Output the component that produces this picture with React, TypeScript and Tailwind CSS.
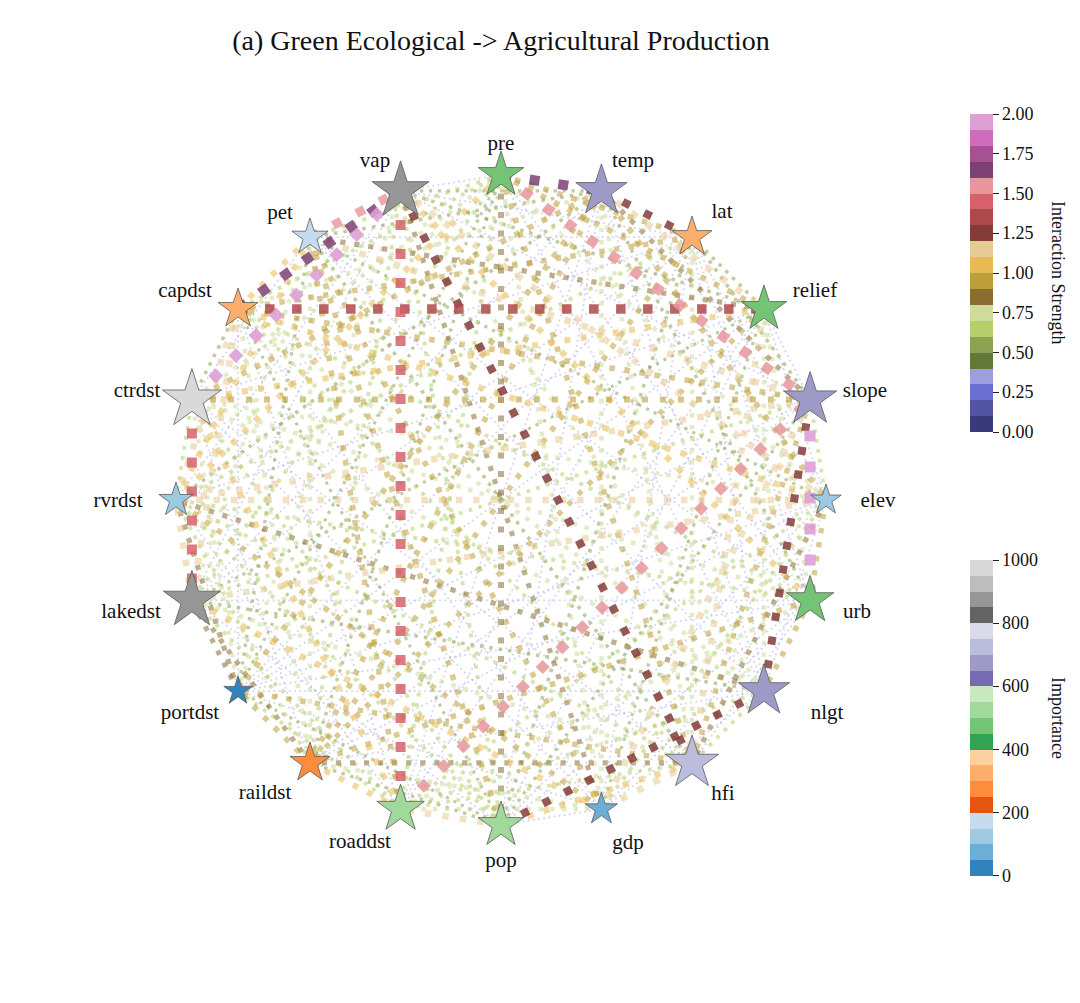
import React from "react";

type Node = { n: string; c: string; r: number; lx: number; ly: number };

const nodes: Node[] = [
  { n: "pre", c: "#74c476", r: 24, lx: 501, ly: 143 },
  { n: "temp", c: "#9e9ac8", r: 27, lx: 633, ly: 160 },
  { n: "lat", c: "#fdae6b", r: 21, lx: 722, ly: 211 },
  { n: "relief", c: "#74c476", r: 24, lx: 815, ly: 290 },
  { n: "slope", c: "#9e9ac8", r: 28, lx: 865, ly: 390 },
  { n: "elev", c: "#9ecae1", r: 16, lx: 878, ly: 500 },
  { n: "urb", c: "#74c476", r: 25, lx: 857, ly: 611 },
  { n: "nlgt", c: "#9e9ac8", r: 27, lx: 827, ly: 712 },
  { n: "hfi", c: "#bcbddc", r: 28, lx: 723, ly: 793 },
  { n: "gdp", c: "#6baed6", r: 17, lx: 628, ly: 842 },
  { n: "pop", c: "#a1d99b", r: 24, lx: 501, ly: 860 },
  { n: "roaddst", c: "#a1d99b", r: 25, lx: 360, ly: 841 },
  { n: "raildst", c: "#fd8d3c", r: 21, lx: 265, ly: 792 },
  { n: "portdst", c: "#3182bd", r: 15, lx: 190, ly: 712 },
  { n: "lakedst", c: "#969696", r: 30, lx: 131, ly: 611 },
  { n: "rvrdst", c: "#9ecae1", r: 18, lx: 118, ly: 500 },
  { n: "ctrdst", c: "#d9d9d9", r: 31, lx: 137, ly: 390 },
  { n: "capdst", c: "#fdae6b", r: 21, lx: 185, ly: 290 },
  { n: "pet", c: "#c6dbef", r: 19, lx: 280, ly: 212 },
  { n: "vap", c: "#969696", r: 30, lx: 375, ly: 160 },
];

const CX = 501;
const CY = 500;
const R = 325;

const pos = nodes.map((_, i) => {
  const a = ((-90 + 18 * i) * Math.PI) / 180;
  return { x: CX + R * Math.cos(a), y: CY + R * Math.sin(a) };
});

const idx = (name: string) => nodes.findIndex((d) => d.n === name);

// tab20b, low -> high
const tab20b = [
  "#393b79", "#5254a3", "#6b6ecf", "#9c9ede", "#637939", "#8ca252", "#b5cf6b", "#cedb9c", "#8c6d31", "#bd9e39",
  "#e7ba52", "#e7cb94", "#843c39", "#ad494a", "#d6616b", "#e7969c", "#7b4173", "#a55194", "#ce6dbd", "#de9ed6",
];

const strengthBar = [
  "bg-[#de9ed6]", "bg-[#ce6dbd]", "bg-[#a55194]", "bg-[#7b4173]", "bg-[#e7969c]", "bg-[#d6616b]", "bg-[#ad494a]",
  "bg-[#843c39]", "bg-[#e7cb94]", "bg-[#e7ba52]", "bg-[#bd9e39]", "bg-[#8c6d31]", "bg-[#cedb9c]", "bg-[#b5cf6b]",
  "bg-[#8ca252]", "bg-[#637939]", "bg-[#9c9ede]", "bg-[#6b6ecf]", "bg-[#5254a3]", "bg-[#393b79]",
];

const importanceBar = [
  "bg-[#d9d9d9]", "bg-[#bdbdbd]", "bg-[#969696]", "bg-[#636363]", "bg-[#dadaeb]", "bg-[#bcbddc]", "bg-[#9e9ac8]",
  "bg-[#756bb1]", "bg-[#c7e9c0]", "bg-[#a1d99b]", "bg-[#74c476]", "bg-[#31a354]", "bg-[#fdd0a2]", "bg-[#fdae6b]",
  "bg-[#fd8d3c]", "bg-[#e6550d]", "bg-[#c6dbef]", "bg-[#9ecae1]", "bg-[#6baed6]", "bg-[#3182bd]",
];

// strong interactions: a, b, colour, width, gap, opacity
const strong: [string, string, string, number, number, number][] = [
  ["pre", "pop", "#8c6d31", 6, 12.5, 0.55],
  ["ctrdst", "slope", "#bd9e39", 6, 12, 0.6],
  ["temp", "lat", "#843c39", 8, 16, 0.85],
  ["slope", "nlgt", "#843c39", 8, 16, 0.85],
  ["nlgt", "pop", "#843c39", 8, 16, 0.85],
  ["vap", "hfi", "#843c39", 8, 16.5, 0.85],
  ["capdst", "relief", "#ad494a", 9.5, 17.5, 0.85],
  ["vap", "roaddst", "#d6616b", 10, 19, 0.85],
  ["ctrdst", "lakedst", "#d6616b", 10, 19, 0.85],
  ["pet", "vap", "#e7969c", 9, 17, 0.8],
  ["pre", "slope", "#e7969c", 10, 17, 0.85],
  ["roaddst", "slope", "#e7969c", 10, 18, 0.85],
  ["capdst", "vap", "#7b4173", 10, 17, 0.85],
  ["pre", "temp", "#7b4173", 10, 19, 0.85],
  ["ctrdst", "vap", "#de9ed6", 10.5, 18, 0.9],
  ["slope", "urb", "#de9ed6", 11, 20, 0.9],
];

function mulberry32(seed: number) {
  let a = seed;
  return () => {
    a |= 0;
    a = (a + 0x6d2b79f5) | 0;
    let t = Math.imul(a ^ (a >>> 15), 1 | a);
    t = (t + Math.imul(t ^ (t >>> 7), 61 | t)) ^ t;
    return ((t ^ (t >>> 14)) >>> 0) / 4294967296;
  };
}

type Edge = { a: number; b: number; color: string; w: number; gap: number; op: number; s: number };

function buildEdges(): Edge[] {
  const rand = mulberry32(77123);
  const strongKeys = new Set(strong.map(([a, b]) => [idx(a), idx(b)].sort((x, y) => x - y).join("-")));
  const bg: Edge[] = [];
  for (let i = 0; i < nodes.length; i++) {
    for (let j = i + 1; j < nodes.length; j++) {
      if (strongKeys.has(`${i}-${j}`)) continue;
      const u = rand();
      let s: number;
      if (u < 0.26) s = 0.3 + rand() * 0.099;
      else if (u < 0.62) s = 0.5 + rand() * 0.299;
      else s = 0.85 + rand() * 0.349;
      const color = tab20b[Math.min(19, Math.floor(s * 10))];
      const w = s < 0.4 ? 1.8 : 2.5 + (s - 0.4) * 5.5;
      const gap = s < 0.4 ? 3.4 : w * 1.7;
      const op = s < 0.4 ? 0.45 : 0.55;
      bg.push({ a: i, b: j, color, w, gap, op, s });
    }
  }
  bg.sort((p, q) => p.s - q.s);
  const st: Edge[] = strong.map(([a, b, color, w, gap, op]) => ({ a: idx(a), b: idx(b), color, w, gap, op, s: 2 }));
  return [...bg, ...st];
}

const edges = buildEdges();

function starPath(x: number, y: number, r: number) {
  const pts: string[] = [];
  for (let k = 0; k < 10; k++) {
    const a = ((-90 + 36 * k) * Math.PI) / 180;
    const rr = k % 2 === 0 ? r : r * 0.382;
    pts.push(`${(x + rr * Math.cos(a)).toFixed(2)},${(y + rr * Math.sin(a)).toFixed(2)}`);
  }
  return `M${pts.join("L")}Z`;
}

function Network() {
  return (
    <svg width={940} height={860} viewBox="0 70 940 860" className="block shrink-0">
      {edges.map((e, k) => {
        const p = pos[e.a];
        const q = pos[e.b];
        return (
          <line
            key={k}
            x1={p.x}
            y1={p.y}
            x2={q.x}
            y2={q.y}
            stroke={e.color}
            strokeOpacity={e.op}
            strokeWidth={e.w}
            strokeDasharray={`${e.w} ${e.gap}`}
          />
        );
      })}
      {nodes.map((d, i) => (
        <path key={d.n} d={starPath(pos[i].x, pos[i].y, d.r)} fill={d.c} stroke="#5a5a5a" strokeWidth={0.8} />
      ))}
      {nodes.map((d) => (
        <text key={d.n} x={d.lx} y={d.ly} textAnchor="middle" dominantBaseline="central" fontSize={21} fill="#111">
          {d.n}
        </text>
      ))}
    </svg>
  );
}

function ColorBar({ colors, ticks, label, height }: { colors: string[]; ticks: string[]; label: string; height: string }) {
  return (
    <div className={`flex ${height}`}>
      <div className="flex w-[23px] flex-col">
        {colors.map((c) => (
          <div key={c} className={`flex-1 ${c}`} />
        ))}
      </div>
      <div className="flex w-[48px] flex-col justify-between">
        {ticks.map((t) => (
          <div key={t} className="flex h-0 items-center">
            <div className="h-px w-[6px] bg-[#222]" />
            <span className="ml-[3px] text-[18px] leading-none text-[#111]">{t}</span>
          </div>
        ))}
      </div>
      <div className="ml-[8px] self-center text-[18px] leading-none text-[#111] [writing-mode:vertical-rl]">{label}</div>
    </div>
  );
}

export default function App() {
  return (
    <div className="h-[1003px] w-[1080px] overflow-hidden bg-white font-['Liberation_Serif',serif]">
      <div className="h-[70px] w-[1002px] pt-[27px] text-center text-[28px] leading-none text-[#111]">
        (a) Green Ecological -&gt; Agricultural Production
      </div>
      <div className="flex">
        <Network />
        <div className="flex flex-col pl-[30px] pt-[44px]">
          <ColorBar
            colors={strengthBar}
            ticks={["2.00", "1.75", "1.50", "1.25", "1.00", "0.75", "0.50", "0.25", "0.00"]}
            label="Interaction Strength"
            height="h-[318px]"
          />
          <div className="mt-[128px]">
            <ColorBar
              colors={importanceBar}
              ticks={["1000", "800", "600", "400", "200", "0"]}
              label="Importance"
              height="h-[316px]"
            />
          </div>
        </div>
      </div>
    </div>
  );
}
